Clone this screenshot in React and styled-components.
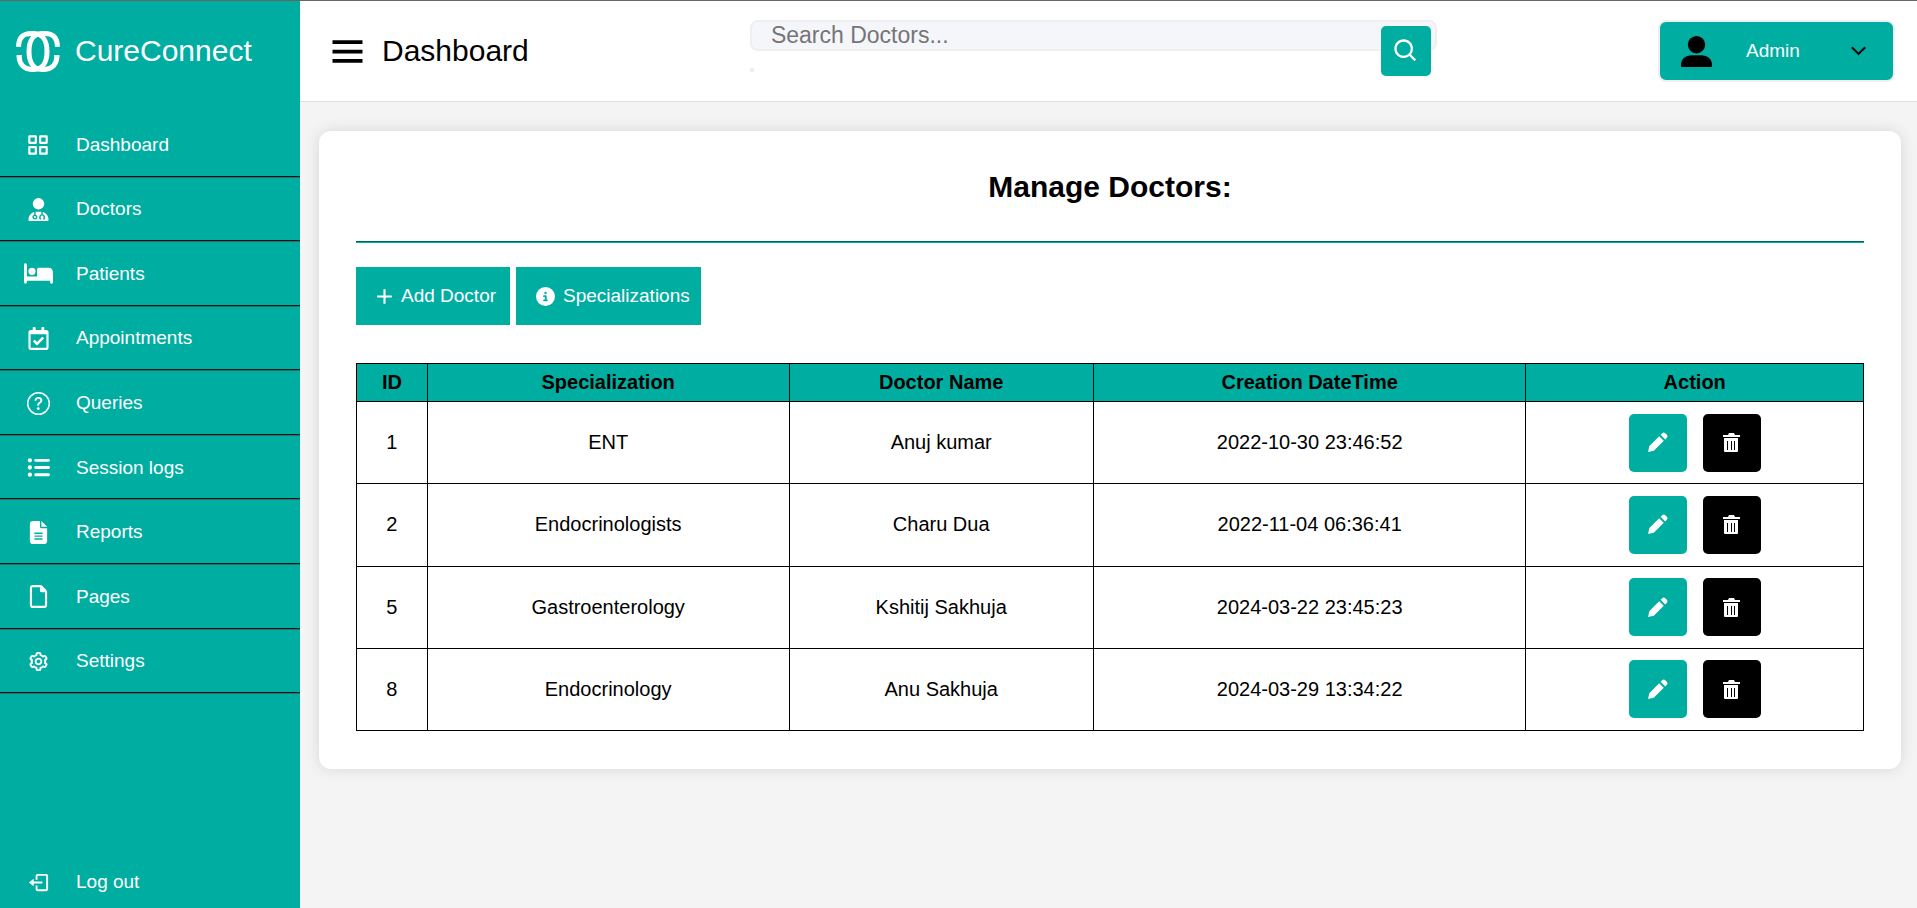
import React from 'react';
import styled, { createGlobalStyle } from 'styled-components';
import { BiGridAlt, BiCog, BiLogOut, BiMenu, BiSearch, BiPlus, BiSolidPencil } from 'react-icons/bi';
import { BsQuestionCircle } from 'react-icons/bs';
import { FaUserDoctor, FaBed, FaListUl, FaFileLines, FaRegFile, FaCircleInfo } from 'react-icons/fa6';
import { FaRegCalendarCheck } from 'react-icons/fa';

const teal = '#00ada1';

const GlobalStyle = createGlobalStyle`
  *, *::before, *::after { box-sizing: border-box; }
  body {
    margin: 0;
    background: #f4f4f4;
    color: #000;
    font-family: "Liberation Sans", Arial, sans-serif;
    font-size: 19px;
  }
  svg { display: block; flex: none; }
  button, input { font-family: inherit; }
`;

const Page = styled.div`
  display: flex;
  min-height: 100vh;
  border-top: 1px solid #666;
`;

const Sidebar = styled.aside`
  display: flex;
  flex-direction: column;
  flex: none;
  width: 300px;
  background: ${teal};
  color: #fff;
`;

const Brand = styled.div`
  display: flex;
  align-items: center;
  gap: 15px;
  height: 100px;
  padding-left: 16px;
  font-size: 30px;
`;

const Menu = styled.ul`
  display: flex;
  flex-direction: column;
  min-height: 581px;
  margin: 12px 0 0;
  padding: 0;
  list-style: none;
`;

const MenuItem = styled.li`
  display: flex;
  flex: 1;
  border-bottom: 1px solid #356b67;
  box-shadow: inset 0 -1px 0 #041c1b;
`;

const NavLink = styled.a`
  display: flex;
  align-items: center;
  flex: 1;
  color: #fff;
  text-decoration: none;
`;

const NavIcon = styled.span`
  display: flex;
  justify-content: center;
  width: 76px;
`;

const Logout = styled(NavLink)`
  flex: none;
  height: 52px;
  margin-top: auto;
`;

const Main = styled.main`
  flex: 1;
  min-width: 0;
`;

const Header = styled.header`
  display: flex;
  align-items: center;
  justify-content: space-between;
  height: 101px;
  padding: 0 22px 0 25px;
  background: #fff;
  border-bottom: 1px solid #e0e0e0;
`;

const Heading = styled.div`
  display: flex;
  align-items: center;
  gap: 12px;
`;

const PageName = styled.h1`
  margin: 0;
  font-size: 30px;
  font-weight: 400;
`;

const MenuButton = styled.button`
  padding: 0;
  border: 0;
  background: none;
  color: #000;
`;

const Search = styled.form`
  position: relative;
  flex: 0 1 687px;
  height: 62px;
`;

const SearchInput = styled.input`
  display: block;
  width: 100%;
  height: 31px;
  padding: 0 60px 0 19px;
  border: 2px solid #efeef1;
  border-radius: 8px;
  background: #f5f6fa;
  font-size: 23px;
  line-height: 27px;
  &::placeholder { color: #757575; }
`;

const SearchResults = styled.div`
  width: 4px;
  margin-top: 17px;
  border: 2px solid #efeef1;
`;

const SearchButton = styled.button`
  position: absolute;
  top: 6px;
  right: 6px;
  display: flex;
  align-items: center;
  justify-content: center;
  width: 50px;
  height: 50px;
  padding: 0;
  border: 0;
  border-radius: 5px;
  background: ${teal};
  color: #fff;
`;

const Profile = styled.button`
  display: flex;
  align-items: center;
  gap: 34px;
  width: 237px;
  height: 62px;
  padding: 0 27px 0 21px;
  border: 2px solid #efeef1;
  border-radius: 8px;
  background: ${teal};
  color: #fff;
  font-size: 19px;
  svg { color: #000; }
  svg:last-child { margin-left: auto; }
`;

const Card = styled.section`
  margin: 29px 16px 29px 19px;
  padding: 38px 37px;
  border-radius: 12px;
  background: #fff;
  box-shadow: 0 0 15px rgba(0, 0, 0, 0.12);
`;

const Title = styled.h2`
  margin: 0 0 36px;
  font-size: 30px;
  line-height: 36px;
  text-align: center;
`;

const Rule = styled.hr`
  margin: 0 0 24px;
  border: 0;
  border-top: 1px solid #00625c;
  border-bottom: 1px solid ${teal};
`;

const Actions = styled.div`
  display: flex;
  gap: 6px;
  margin-bottom: 38px;
`;

const ActionLink = styled.a`
  display: flex;
  align-items: center;
  gap: ${(p) => p.$gap}px;
  min-width: 154px;
  height: 58px;
  padding: 0 11px 0 ${(p) => p.$inset}px;
  background: ${teal};
  color: #fff;
  font-size: 19px;
  text-decoration: none;
`;

const Table = styled.table`
  width: 100%;
  height: 368px;
  table-layout: fixed;
  border-collapse: collapse;
  font-size: 20px;
  text-align: center;
`;

const Th = styled.th`
  width: ${(p) => p.$width};
  height: 38px;
  padding: 0;
  border: 1px solid #000;
  background: ${teal};
`;

const Td = styled.td`
  padding: 11px 0;
  border: 1px solid #000;
`;

const RowActions = styled.div`
  display: flex;
  justify-content: center;
  gap: 16px;
`;

const IconButton = styled.button`
  display: flex;
  align-items: center;
  justify-content: center;
  width: 58px;
  height: 58px;
  padding: 0;
  border: 0;
  border-radius: 5px;
  background: ${(p) => p.$color};
  color: #fff;
`;

const Logo = () => (
  <svg width="44" height="41" viewBox="0 0 44 41" fill="none" stroke="#fff" strokeWidth="5" aria-hidden="true">
    <path d="M2.6 15.5C2.8 6.500 7 2.6 15.5 2.6H18C27 2.6 31 10.5 31 20.5S27 38.4 18 38.4H15.5C8 38.4 3.5 33.5 3 25.2" />
    <path d="M41.4 15.5C41.2 6.500 37 2.6 28.5 2.6H26C17 2.6 13 10.5 13 20.5S17 38.4 26 38.4H28.5C36 38.4 40.5 33.5 41 25.2" />
    <path d="M0.500 24.8H6M38 24.8H43.5M0.3 15H5M39 15H43.7" strokeWidth="1.4" />
  </svg>
);

const Person = () => (
  <svg width="31" height="31" viewBox="0 0 31 31" fill="currentColor" aria-hidden="true">
    <circle cx="15.5" cy="8.7" r="8.7" />
    <path d="M0 29C0 23 4.5 19.3 11 19.3H20C26.5 19.3 31 23 31 29V30Q31 31 30 31H1Q0 31 0 30Z" />
  </svg>
);

const Chevron = () => (
  <svg width="15" height="10" viewBox="0 0 15 10" fill="none" stroke="currentColor" strokeWidth="2" aria-hidden="true">
    <path d="M0.8 1.2L7.5 7.9L14.2 1.2" />
  </svg>
);

const Trash = () => (
  <svg width="17" height="19" viewBox="0 0 17 19" fill="currentColor" aria-hidden="true">
    <path d="M6 0H11L12 2H17V4H0V2H5Z" />
    <path fillRule="evenodd" d="M1 5H15V18Q15 19 14 19H2Q1 19 1 18ZM4 8V17H5V8ZM8 8V17H9V8ZM11 8V17H12V8Z" />
  </svg>
);

const menu = [
  ['Dashboard', BiGridAlt, 26],
  ['Doctors', FaUserDoctor, 23],
  ['Patients', FaBed, 29],
  ['Appointments', FaRegCalendarCheck, 23],
  ['Queries', BsQuestionCircle, 23],
  ['Session logs', FaListUl, 23],
  ['Reports', FaFileLines, 23],
  ['Pages', FaRegFile, 23],
  ['Settings', BiCog, 23],
];

const columns = [
  ['ID', '4.7%'],
  ['Specialization', '24%'],
  ['Doctor Name', '20.2%'],
  ['Creation DateTime', '28.7%'],
  ['Action', '22.4%'],
];

const doctors = [
  [1, 'ENT', 'Anuj kumar', '2022-10-30 23:46:52'],
  [2, 'Endocrinologists', 'Charu Dua', '2022-11-04 06:36:41'],
  [5, 'Gastroenterology', 'Kshitij Sakhuja', '2024-03-22 23:45:23'],
  [8, 'Endocrinology', 'Anu Sakhuja', '2024-03-29 13:34:22'],
];

export default function App() {
  return (
    <>
      <GlobalStyle />
      <Page>
        <Sidebar>
          <Brand>
            <Logo />
            CureConnect
          </Brand>
          <Menu>
            {menu.map(([label, Icon, size]) => (
              <MenuItem key={label}>
                <NavLink href="#">
                  <NavIcon><Icon size={size} /></NavIcon>
                  {label}
                </NavLink>
              </MenuItem>
            ))}
          </Menu>
          <Logout href="#">
            <NavIcon><BiLogOut size={23} /></NavIcon>
            Log out
          </Logout>
        </Sidebar>
        <Main>
          <Header>
            <Heading>
              <MenuButton aria-label="Toggle menu"><BiMenu size={45} /></MenuButton>
              <PageName>Dashboard</PageName>
            </Heading>
            <Search onSubmit={(e) => e.preventDefault()}>
              <SearchInput type="text" placeholder="Search Doctors..." aria-label="Search Doctors" />
              <SearchResults />
              <SearchButton type="submit" aria-label="Search"><BiSearch size={28} /></SearchButton>
            </Search>
            <Profile>
              <Person />
              <span>Admin</span>
              <Chevron />
            </Profile>
          </Header>
          <Card>
            <Title>Manage Doctors:</Title>
            <Rule />
            <Actions>
              <ActionLink href="#" $inset={16} $gap={4}><BiPlus size={25} />Add Doctor</ActionLink>
              <ActionLink href="#" $inset={20} $gap={8}><FaCircleInfo size={19} />Specializations</ActionLink>
            </Actions>
            <Table>
              <thead>
                <tr>
                  {columns.map(([name, width]) => <Th key={name} $width={width}>{name}</Th>)}
                </tr>
              </thead>
              <tbody>
                {doctors.map((row) => (
                  <tr key={row[0]}>
                    {row.map((value) => <Td key={value}>{value}</Td>)}
                    <Td>
                      <RowActions>
                        <IconButton $color={teal} aria-label="Edit"><BiSolidPencil size={25} /></IconButton>
                        <IconButton $color="#000" aria-label="Delete"><Trash /></IconButton>
                      </RowActions>
                    </Td>
                  </tr>
                ))}
              </tbody>
            </Table>
          </Card>
        </Main>
      </Page>
    </>
  );
}
